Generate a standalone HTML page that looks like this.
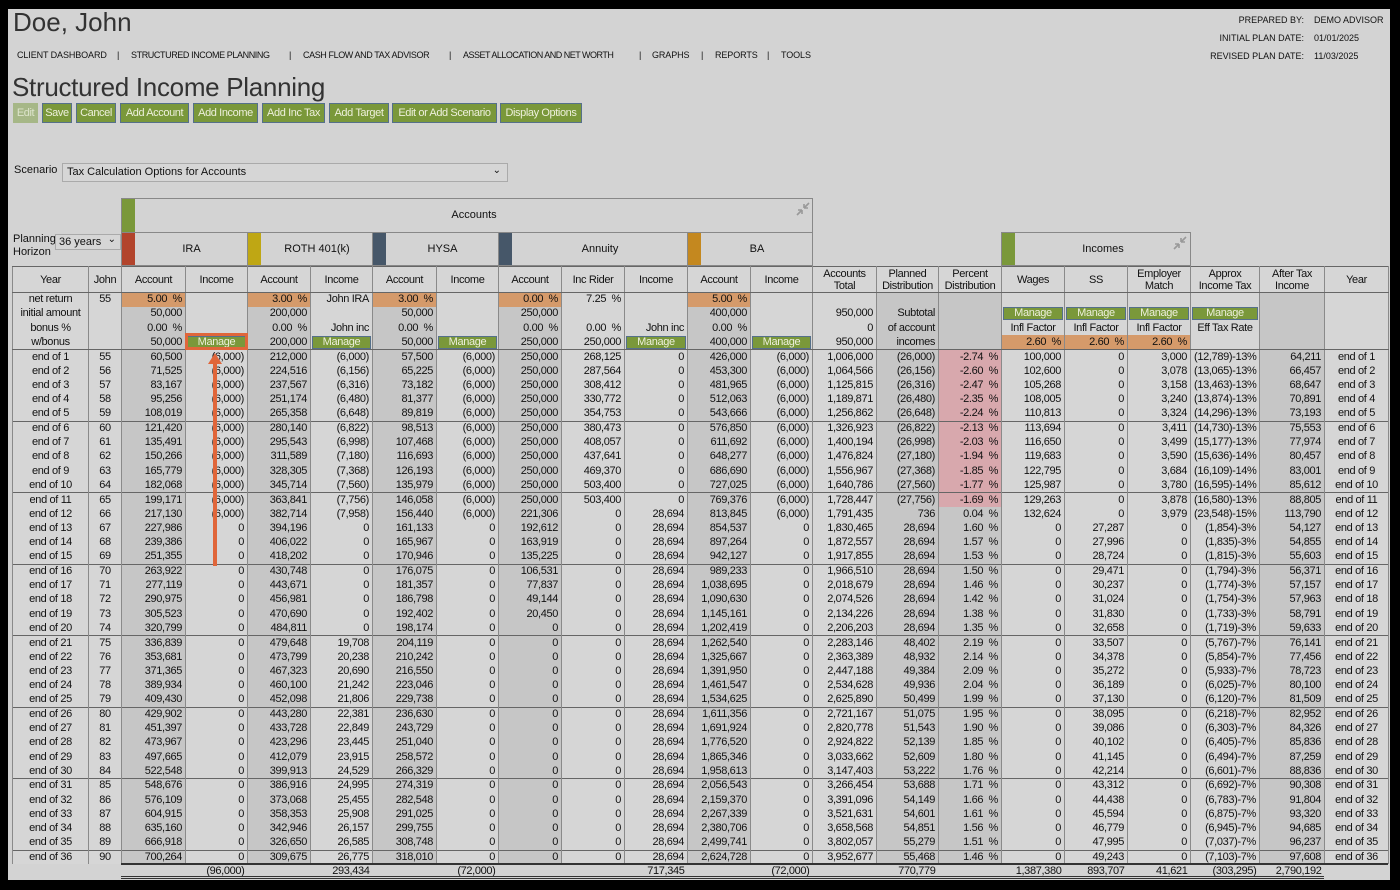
<!DOCTYPE html>
<html><head><meta charset="utf-8">
<style>
*{box-sizing:border-box;margin:0;padding:0}
body{width:1400px;height:890px;background:#000;position:relative;overflow:hidden;font-family:"Liberation Sans",sans-serif;color:#111}
#pg{position:absolute;left:8px;top:9px;width:1382px;height:871px;background:#d3d3d3}
.a{position:absolute;white-space:nowrap}
.nav{font-size:9px;top:50px;letter-spacing:-0.1px}
.btn{position:absolute;top:103px;height:20px;background:#7a983a;border:1px solid #55708a;color:#eef0dc;font-size:11px;line-height:18px;text-align:center;white-space:nowrap;overflow:hidden;letter-spacing:-0.4px}
.rh{font-size:9px;text-align:right;width:160px}
.box{position:absolute;border:1px solid #888;background:#d3d3d3;font-size:11px;text-align:center}
.st{position:absolute}
table{position:absolute;left:12px;top:266px;width:1376px;border-collapse:collapse;table-layout:fixed;font-size:11px;letter-spacing:-0.35px}
td{border-left:1px solid #8a8a8a;border-right:1px solid #8a8a8a;text-align:right;padding:0 3px;height:14.3px;line-height:13px;white-space:nowrap;overflow:hidden}
tr.h td{height:26px;border-top:1px solid #666;border-bottom:1px solid #666;text-align:center;line-height:12px;background:#d6d6d6;padding:0 1px}
tr.g td{border-top:1px solid #666}
tr.pb td{border-bottom:1px solid #666}
td.c{text-align:center}
.or{background:#d59a6a!important}
.pk{background:#d8a8ad!important}
.mg{display:block;background:#7a983a;border:1px solid #55708a;color:#eef0dc;text-align:center;height:13px;line-height:11px;margin:0 -2px}
tr.t td{border:none;background:#d3d3d3!important;height:15px}
col.d{background:#c6c6c6}
col.l{background:#d6d6d6}
</style></head><body>
<div id="pg"></div>
<div class="a" style="left:13px;top:7px;font-size:26px;color:#333">Doe, John</div>
<div class="a nav" style="left:17px">CLIENT DASHBOARD</div><div class="a nav" style="left:117px">|</div>
<div class="a nav" style="left:131px;letter-spacing:-0.4px">STRUCTURED INCOME PLANNING</div><div class="a nav" style="left:289px">|</div>
<div class="a nav" style="left:303px;letter-spacing:-0.4px">CASH FLOW AND TAX ADVISOR</div><div class="a nav" style="left:449px">|</div>
<div class="a nav" style="left:463px;letter-spacing:-0.5px">ASSET ALLOCATION AND NET WORTH</div><div class="a nav" style="left:639px">|</div>
<div class="a nav" style="left:652px">GRAPHS</div><div class="a nav" style="left:701px">|</div>
<div class="a nav" style="left:715px">REPORTS</div><div class="a nav" style="left:767px">|</div>
<div class="a nav" style="left:781px">TOOLS</div>
<div class="a rh" style="left:1144px;top:15px">PREPARED BY:</div><div class="a" style="left:1314px;top:15px;font-size:9px">DEMO ADVISOR</div>
<div class="a rh" style="left:1144px;top:33px">INITIAL PLAN DATE:</div><div class="a" style="left:1314px;top:33px;font-size:9px">01/01/2025</div>
<div class="a rh" style="left:1144px;top:51px">REVISED PLAN DATE:</div><div class="a" style="left:1314px;top:51px;font-size:9px">11/03/2025</div>
<div class="a" style="left:12px;top:72px;font-size:26px;color:#333;letter-spacing:-0.3px">Structured Income Planning</div>
<div class="btn" style="left:13px;width:25px;background:#a6b787;color:#dde4cc;border-color:#a6b787">Edit</div>
<div class="btn" style="left:42px;width:30px">Save</div>
<div class="btn" style="left:76px;width:40px">Cancel</div>
<div class="btn" style="left:120px;width:69px">Add Account</div>
<div class="btn" style="left:193px;width:65px">Add Income</div>
<div class="btn" style="left:262px;width:63px">Add Inc Tax</div>
<div class="btn" style="left:329px;width:60px">Add Target</div>
<div class="btn" style="left:392px;width:105px">Edit or Add Scenario</div>
<div class="btn" style="left:500px;width:82px">Display Options</div>
<div class="a" style="left:14px;top:164px;font-size:11px">Scenario</div>
<div class="a" style="left:62px;top:163px;width:446px;height:19px;border:1px solid #aaa;background:#d6d6d6;font-size:11px;line-height:17px;padding-left:4px">Tax Calculation Options for Accounts<span style="position:absolute;right:6px;top:-2px;font-size:10px">&#8964;</span></div>
<div class="a" style="left:13px;top:233px;font-size:11px;line-height:13px">Planning<br>Horizon</div>
<div class="a" style="left:55px;top:234px;width:66px;height:16px;border:1px solid #aaa;background:#d6d6d6;font-size:11px;line-height:14px;padding-left:3px">36 years<span style="position:absolute;right:4px;top:-2px;font-size:10px">&#8964;</span></div>
<div class="box" style="left:121px;top:198px;width:692px;height:35px;line-height:33px;padding-left:14px">Accounts</div>
<div class="st" style="left:122px;top:199px;width:13px;height:33px;background:#7a983a"></div>
<svg class="a" style="left:795px;top:201px" width="16" height="16"><path d="M2 14 L7 9 M7 9 L7 13 M7 9 L3 9 M14 2 L9 7 M9 7 L9 3 M9 7 L13 7" stroke="#999" stroke-width="1.6" fill="none"/></svg>
<div class="box" style="left:121px;top:232px;width:127px;height:34px;line-height:32px;padding-left:14px">IRA</div><div class="st" style="left:122px;top:233px;width:13px;height:32px;background:#b2442c"></div>
<div class="box" style="left:247px;top:232px;width:126px;height:34px;line-height:32px;padding-left:14px">ROTH 401(k)</div><div class="st" style="left:248px;top:233px;width:13px;height:32px;background:#bfa714"></div>
<div class="box" style="left:372px;top:232px;width:127px;height:34px;line-height:32px;padding-left:14px">HYSA</div><div class="st" style="left:373px;top:233px;width:13px;height:32px;background:#465769"></div>
<div class="box" style="left:498px;top:232px;width:190px;height:34px;line-height:32px;padding-left:14px">Annuity</div><div class="st" style="left:499px;top:233px;width:13px;height:32px;background:#465769"></div>
<div class="box" style="left:687px;top:232px;width:126px;height:34px;line-height:32px;padding-left:14px">BA</div><div class="st" style="left:688px;top:233px;width:13px;height:32px;background:#c4881f"></div>
<div class="box" style="left:1001px;top:232px;width:190px;height:34px;line-height:32px;padding-left:14px">Incomes</div><div class="st" style="left:1002px;top:233px;width:13px;height:32px;background:#7a983a"></div>
<svg class="a" style="left:1172px;top:235px" width="16" height="16"><path d="M2 14 L7 9 M7 9 L7 13 M7 9 L3 9 M14 2 L9 7 M9 7 L9 3 M9 7 L13 7" stroke="#999" stroke-width="1.6" fill="none"/></svg>
<table>
<colgroup><col class="l" style="width:76px"><col class="l" style="width:33px"><col class="d" style="width:64px"><col class="l" style="width:62px"><col class="d" style="width:63px"><col class="l" style="width:62px"><col class="d" style="width:64px"><col class="l" style="width:62px"><col class="d" style="width:63px"><col class="l" style="width:63px"><col class="l" style="width:63px"><col class="d" style="width:63px"><col class="l" style="width:62px"><col class="l" style="width:64px"><col class="d" style="width:62px"><col class="d" style="width:63px"><col class="l" style="width:63px"><col class="l" style="width:63px"><col class="l" style="width:63px"><col class="l" style="width:69px"><col class="d" style="width:65px"><col class="l" style="width:64px"></colgroup>
<tr class="h"><td>Year</td><td>John</td><td>Account</td><td>Income</td><td>Account</td><td>Income</td><td>Account</td><td>Income</td><td>Account</td><td>Inc Rider</td><td>Income</td><td>Account</td><td>Income</td><td>Accounts<br>Total</td><td>Planned<br>Distribution</td><td>Percent<br>Distribution</td><td>Wages</td><td>SS</td><td>Employer<br>Match</td><td>Approx<br>Income Tax</td><td>After Tax<br>Income</td><td>Year</td></tr>
<tr><td class="c">net return</td><td class="c">55</td><td class="or">5.00 &nbsp;%</td><td></td><td class="or">3.00 &nbsp;%</td><td>John IRA</td><td class="or">3.00 &nbsp;%</td><td></td><td class="or">0.00 &nbsp;%</td><td>7.25 &nbsp;%</td><td></td><td class="or">5.00 &nbsp;%</td><td></td><td></td><td></td><td></td><td></td><td></td><td></td><td></td><td></td><td></td></tr>
<tr><td class="c">initial amount</td><td></td><td>50,000</td><td></td><td>200,000</td><td></td><td>50,000</td><td></td><td>250,000</td><td></td><td></td><td>400,000</td><td></td><td>950,000</td><td>Subtotal</td><td></td><td><span class="mg">Manage</span></td><td><span class="mg">Manage</span></td><td><span class="mg">Manage</span></td><td><span class="mg">Manage</span></td><td></td><td></td></tr>
<tr><td class="c">bonus %</td><td></td><td>0.00 &nbsp;%</td><td></td><td>0.00 &nbsp;%</td><td>John inc</td><td>0.00 &nbsp;%</td><td></td><td>0.00 &nbsp;%</td><td>0.00 &nbsp;%</td><td>John inc</td><td>0.00 &nbsp;%</td><td></td><td>0</td><td>of account</td><td></td><td class="c">Infl Factor</td><td class="c">Infl Factor</td><td class="c">Infl Factor</td><td class="c">Eff Tax Rate</td><td></td><td></td></tr>
<tr class="pb"><td class="c">w/bonus</td><td></td><td>50,000</td><td><span class="mg">Manage</span></td><td>200,000</td><td><span class="mg">Manage</span></td><td>50,000</td><td><span class="mg">Manage</span></td><td>250,000</td><td>250,000</td><td><span class="mg">Manage</span></td><td>400,000</td><td><span class="mg">Manage</span></td><td>950,000</td><td>incomes</td><td></td><td class="or">2.60 &nbsp;%</td><td class="or">2.60 &nbsp;%</td><td class="or">2.60 &nbsp;%</td><td></td><td></td><td></td></tr>
<tr><td class="c">end of 1</td><td class="c">55</td><td>60,500</td><td>(6,000)</td><td>212,000</td><td>(6,000)</td><td>57,500</td><td>(6,000)</td><td>250,000</td><td>268,125</td><td>0</td><td>426,000</td><td>(6,000)</td><td>1,006,000</td><td>(26,000)</td><td class="pk">-2.74 &nbsp;%</td><td>100,000</td><td>0</td><td>3,000</td><td>(12,789)-13%</td><td>64,211</td><td class="c">end of 1</td></tr>
<tr><td class="c">end of 2</td><td class="c">56</td><td>71,525</td><td>(6,000)</td><td>224,516</td><td>(6,156)</td><td>65,225</td><td>(6,000)</td><td>250,000</td><td>287,564</td><td>0</td><td>453,300</td><td>(6,000)</td><td>1,064,566</td><td>(26,156)</td><td class="pk">-2.60 &nbsp;%</td><td>102,600</td><td>0</td><td>3,078</td><td>(13,065)-13%</td><td>66,457</td><td class="c">end of 2</td></tr>
<tr><td class="c">end of 3</td><td class="c">57</td><td>83,167</td><td>(6,000)</td><td>237,567</td><td>(6,316)</td><td>73,182</td><td>(6,000)</td><td>250,000</td><td>308,412</td><td>0</td><td>481,965</td><td>(6,000)</td><td>1,125,815</td><td>(26,316)</td><td class="pk">-2.47 &nbsp;%</td><td>105,268</td><td>0</td><td>3,158</td><td>(13,463)-13%</td><td>68,647</td><td class="c">end of 3</td></tr>
<tr><td class="c">end of 4</td><td class="c">58</td><td>95,256</td><td>(6,000)</td><td>251,174</td><td>(6,480)</td><td>81,377</td><td>(6,000)</td><td>250,000</td><td>330,772</td><td>0</td><td>512,063</td><td>(6,000)</td><td>1,189,871</td><td>(26,480)</td><td class="pk">-2.35 &nbsp;%</td><td>108,005</td><td>0</td><td>3,240</td><td>(13,874)-13%</td><td>70,891</td><td class="c">end of 4</td></tr>
<tr><td class="c">end of 5</td><td class="c">59</td><td>108,019</td><td>(6,000)</td><td>265,358</td><td>(6,648)</td><td>89,819</td><td>(6,000)</td><td>250,000</td><td>354,753</td><td>0</td><td>543,666</td><td>(6,000)</td><td>1,256,862</td><td>(26,648)</td><td class="pk">-2.24 &nbsp;%</td><td>110,813</td><td>0</td><td>3,324</td><td>(14,296)-13%</td><td>73,193</td><td class="c">end of 5</td></tr>
<tr class="g"><td class="c">end of 6</td><td class="c">60</td><td>121,420</td><td>(6,000)</td><td>280,140</td><td>(6,822)</td><td>98,513</td><td>(6,000)</td><td>250,000</td><td>380,473</td><td>0</td><td>576,850</td><td>(6,000)</td><td>1,326,923</td><td>(26,822)</td><td class="pk">-2.13 &nbsp;%</td><td>113,694</td><td>0</td><td>3,411</td><td>(14,730)-13%</td><td>75,553</td><td class="c">end of 6</td></tr>
<tr><td class="c">end of 7</td><td class="c">61</td><td>135,491</td><td>(6,000)</td><td>295,543</td><td>(6,998)</td><td>107,468</td><td>(6,000)</td><td>250,000</td><td>408,057</td><td>0</td><td>611,692</td><td>(6,000)</td><td>1,400,194</td><td>(26,998)</td><td class="pk">-2.03 &nbsp;%</td><td>116,650</td><td>0</td><td>3,499</td><td>(15,177)-13%</td><td>77,974</td><td class="c">end of 7</td></tr>
<tr><td class="c">end of 8</td><td class="c">62</td><td>150,266</td><td>(6,000)</td><td>311,589</td><td>(7,180)</td><td>116,693</td><td>(6,000)</td><td>250,000</td><td>437,641</td><td>0</td><td>648,277</td><td>(6,000)</td><td>1,476,824</td><td>(27,180)</td><td class="pk">-1.94 &nbsp;%</td><td>119,683</td><td>0</td><td>3,590</td><td>(15,636)-14%</td><td>80,457</td><td class="c">end of 8</td></tr>
<tr><td class="c">end of 9</td><td class="c">63</td><td>165,779</td><td>(6,000)</td><td>328,305</td><td>(7,368)</td><td>126,193</td><td>(6,000)</td><td>250,000</td><td>469,370</td><td>0</td><td>686,690</td><td>(6,000)</td><td>1,556,967</td><td>(27,368)</td><td class="pk">-1.85 &nbsp;%</td><td>122,795</td><td>0</td><td>3,684</td><td>(16,109)-14%</td><td>83,001</td><td class="c">end of 9</td></tr>
<tr><td class="c">end of 10</td><td class="c">64</td><td>182,068</td><td>(6,000)</td><td>345,714</td><td>(7,560)</td><td>135,979</td><td>(6,000)</td><td>250,000</td><td>503,400</td><td>0</td><td>727,025</td><td>(6,000)</td><td>1,640,786</td><td>(27,560)</td><td class="pk">-1.77 &nbsp;%</td><td>125,987</td><td>0</td><td>3,780</td><td>(16,595)-14%</td><td>85,612</td><td class="c">end of 10</td></tr>
<tr class="g"><td class="c">end of 11</td><td class="c">65</td><td>199,171</td><td>(6,000)</td><td>363,841</td><td>(7,756)</td><td>146,058</td><td>(6,000)</td><td>250,000</td><td>503,400</td><td>0</td><td>769,376</td><td>(6,000)</td><td>1,728,447</td><td>(27,756)</td><td class="pk">-1.69 &nbsp;%</td><td>129,263</td><td>0</td><td>3,878</td><td>(16,580)-13%</td><td>88,805</td><td class="c">end of 11</td></tr>
<tr><td class="c">end of 12</td><td class="c">66</td><td>217,130</td><td>(6,000)</td><td>382,714</td><td>(7,958)</td><td>156,440</td><td>(6,000)</td><td>221,306</td><td>0</td><td>28,694</td><td>813,845</td><td>(6,000)</td><td>1,791,435</td><td>736</td><td>0.04 &nbsp;%</td><td>132,624</td><td>0</td><td>3,979</td><td>(23,548)-15%</td><td>113,790</td><td class="c">end of 12</td></tr>
<tr><td class="c">end of 13</td><td class="c">67</td><td>227,986</td><td>0</td><td>394,196</td><td>0</td><td>161,133</td><td>0</td><td>192,612</td><td>0</td><td>28,694</td><td>854,537</td><td>0</td><td>1,830,465</td><td>28,694</td><td>1.60 &nbsp;%</td><td>0</td><td>27,287</td><td>0</td><td>(1,854)-3%</td><td>54,127</td><td class="c">end of 13</td></tr>
<tr><td class="c">end of 14</td><td class="c">68</td><td>239,386</td><td>0</td><td>406,022</td><td>0</td><td>165,967</td><td>0</td><td>163,919</td><td>0</td><td>28,694</td><td>897,264</td><td>0</td><td>1,872,557</td><td>28,694</td><td>1.57 &nbsp;%</td><td>0</td><td>27,996</td><td>0</td><td>(1,835)-3%</td><td>54,855</td><td class="c">end of 14</td></tr>
<tr><td class="c">end of 15</td><td class="c">69</td><td>251,355</td><td>0</td><td>418,202</td><td>0</td><td>170,946</td><td>0</td><td>135,225</td><td>0</td><td>28,694</td><td>942,127</td><td>0</td><td>1,917,855</td><td>28,694</td><td>1.53 &nbsp;%</td><td>0</td><td>28,724</td><td>0</td><td>(1,815)-3%</td><td>55,603</td><td class="c">end of 15</td></tr>
<tr class="g"><td class="c">end of 16</td><td class="c">70</td><td>263,922</td><td>0</td><td>430,748</td><td>0</td><td>176,075</td><td>0</td><td>106,531</td><td>0</td><td>28,694</td><td>989,233</td><td>0</td><td>1,966,510</td><td>28,694</td><td>1.50 &nbsp;%</td><td>0</td><td>29,471</td><td>0</td><td>(1,794)-3%</td><td>56,371</td><td class="c">end of 16</td></tr>
<tr><td class="c">end of 17</td><td class="c">71</td><td>277,119</td><td>0</td><td>443,671</td><td>0</td><td>181,357</td><td>0</td><td>77,837</td><td>0</td><td>28,694</td><td>1,038,695</td><td>0</td><td>2,018,679</td><td>28,694</td><td>1.46 &nbsp;%</td><td>0</td><td>30,237</td><td>0</td><td>(1,774)-3%</td><td>57,157</td><td class="c">end of 17</td></tr>
<tr><td class="c">end of 18</td><td class="c">72</td><td>290,975</td><td>0</td><td>456,981</td><td>0</td><td>186,798</td><td>0</td><td>49,144</td><td>0</td><td>28,694</td><td>1,090,630</td><td>0</td><td>2,074,526</td><td>28,694</td><td>1.42 &nbsp;%</td><td>0</td><td>31,024</td><td>0</td><td>(1,754)-3%</td><td>57,963</td><td class="c">end of 18</td></tr>
<tr><td class="c">end of 19</td><td class="c">73</td><td>305,523</td><td>0</td><td>470,690</td><td>0</td><td>192,402</td><td>0</td><td>20,450</td><td>0</td><td>28,694</td><td>1,145,161</td><td>0</td><td>2,134,226</td><td>28,694</td><td>1.38 &nbsp;%</td><td>0</td><td>31,830</td><td>0</td><td>(1,733)-3%</td><td>58,791</td><td class="c">end of 19</td></tr>
<tr><td class="c">end of 20</td><td class="c">74</td><td>320,799</td><td>0</td><td>484,811</td><td>0</td><td>198,174</td><td>0</td><td>0</td><td>0</td><td>28,694</td><td>1,202,419</td><td>0</td><td>2,206,203</td><td>28,694</td><td>1.35 &nbsp;%</td><td>0</td><td>32,658</td><td>0</td><td>(1,719)-3%</td><td>59,633</td><td class="c">end of 20</td></tr>
<tr class="g"><td class="c">end of 21</td><td class="c">75</td><td>336,839</td><td>0</td><td>479,648</td><td>19,708</td><td>204,119</td><td>0</td><td>0</td><td>0</td><td>28,694</td><td>1,262,540</td><td>0</td><td>2,283,146</td><td>48,402</td><td>2.19 &nbsp;%</td><td>0</td><td>33,507</td><td>0</td><td>(5,767)-7%</td><td>76,141</td><td class="c">end of 21</td></tr>
<tr><td class="c">end of 22</td><td class="c">76</td><td>353,681</td><td>0</td><td>473,799</td><td>20,238</td><td>210,242</td><td>0</td><td>0</td><td>0</td><td>28,694</td><td>1,325,667</td><td>0</td><td>2,363,389</td><td>48,932</td><td>2.14 &nbsp;%</td><td>0</td><td>34,378</td><td>0</td><td>(5,854)-7%</td><td>77,456</td><td class="c">end of 22</td></tr>
<tr><td class="c">end of 23</td><td class="c">77</td><td>371,365</td><td>0</td><td>467,323</td><td>20,690</td><td>216,550</td><td>0</td><td>0</td><td>0</td><td>28,694</td><td>1,391,950</td><td>0</td><td>2,447,188</td><td>49,384</td><td>2.09 &nbsp;%</td><td>0</td><td>35,272</td><td>0</td><td>(5,933)-7%</td><td>78,723</td><td class="c">end of 23</td></tr>
<tr><td class="c">end of 24</td><td class="c">78</td><td>389,934</td><td>0</td><td>460,100</td><td>21,242</td><td>223,046</td><td>0</td><td>0</td><td>0</td><td>28,694</td><td>1,461,547</td><td>0</td><td>2,534,628</td><td>49,936</td><td>2.04 &nbsp;%</td><td>0</td><td>36,189</td><td>0</td><td>(6,025)-7%</td><td>80,100</td><td class="c">end of 24</td></tr>
<tr><td class="c">end of 25</td><td class="c">79</td><td>409,430</td><td>0</td><td>452,098</td><td>21,806</td><td>229,738</td><td>0</td><td>0</td><td>0</td><td>28,694</td><td>1,534,625</td><td>0</td><td>2,625,890</td><td>50,499</td><td>1.99 &nbsp;%</td><td>0</td><td>37,130</td><td>0</td><td>(6,120)-7%</td><td>81,509</td><td class="c">end of 25</td></tr>
<tr class="g"><td class="c">end of 26</td><td class="c">80</td><td>429,902</td><td>0</td><td>443,280</td><td>22,381</td><td>236,630</td><td>0</td><td>0</td><td>0</td><td>28,694</td><td>1,611,356</td><td>0</td><td>2,721,167</td><td>51,075</td><td>1.95 &nbsp;%</td><td>0</td><td>38,095</td><td>0</td><td>(6,218)-7%</td><td>82,952</td><td class="c">end of 26</td></tr>
<tr><td class="c">end of 27</td><td class="c">81</td><td>451,397</td><td>0</td><td>433,728</td><td>22,849</td><td>243,729</td><td>0</td><td>0</td><td>0</td><td>28,694</td><td>1,691,924</td><td>0</td><td>2,820,778</td><td>51,543</td><td>1.90 &nbsp;%</td><td>0</td><td>39,086</td><td>0</td><td>(6,303)-7%</td><td>84,326</td><td class="c">end of 27</td></tr>
<tr><td class="c">end of 28</td><td class="c">82</td><td>473,967</td><td>0</td><td>423,296</td><td>23,445</td><td>251,040</td><td>0</td><td>0</td><td>0</td><td>28,694</td><td>1,776,520</td><td>0</td><td>2,924,822</td><td>52,139</td><td>1.85 &nbsp;%</td><td>0</td><td>40,102</td><td>0</td><td>(6,405)-7%</td><td>85,836</td><td class="c">end of 28</td></tr>
<tr><td class="c">end of 29</td><td class="c">83</td><td>497,665</td><td>0</td><td>412,079</td><td>23,915</td><td>258,572</td><td>0</td><td>0</td><td>0</td><td>28,694</td><td>1,865,346</td><td>0</td><td>3,033,662</td><td>52,609</td><td>1.80 &nbsp;%</td><td>0</td><td>41,145</td><td>0</td><td>(6,494)-7%</td><td>87,259</td><td class="c">end of 29</td></tr>
<tr><td class="c">end of 30</td><td class="c">84</td><td>522,548</td><td>0</td><td>399,913</td><td>24,529</td><td>266,329</td><td>0</td><td>0</td><td>0</td><td>28,694</td><td>1,958,613</td><td>0</td><td>3,147,403</td><td>53,222</td><td>1.76 &nbsp;%</td><td>0</td><td>42,214</td><td>0</td><td>(6,601)-7%</td><td>88,836</td><td class="c">end of 30</td></tr>
<tr class="g"><td class="c">end of 31</td><td class="c">85</td><td>548,676</td><td>0</td><td>386,916</td><td>24,995</td><td>274,319</td><td>0</td><td>0</td><td>0</td><td>28,694</td><td>2,056,543</td><td>0</td><td>3,266,454</td><td>53,688</td><td>1.71 &nbsp;%</td><td>0</td><td>43,312</td><td>0</td><td>(6,692)-7%</td><td>90,308</td><td class="c">end of 31</td></tr>
<tr><td class="c">end of 32</td><td class="c">86</td><td>576,109</td><td>0</td><td>373,068</td><td>25,455</td><td>282,548</td><td>0</td><td>0</td><td>0</td><td>28,694</td><td>2,159,370</td><td>0</td><td>3,391,096</td><td>54,149</td><td>1.66 &nbsp;%</td><td>0</td><td>44,438</td><td>0</td><td>(6,783)-7%</td><td>91,804</td><td class="c">end of 32</td></tr>
<tr><td class="c">end of 33</td><td class="c">87</td><td>604,915</td><td>0</td><td>358,353</td><td>25,908</td><td>291,025</td><td>0</td><td>0</td><td>0</td><td>28,694</td><td>2,267,339</td><td>0</td><td>3,521,631</td><td>54,601</td><td>1.61 &nbsp;%</td><td>0</td><td>45,594</td><td>0</td><td>(6,875)-7%</td><td>93,320</td><td class="c">end of 33</td></tr>
<tr><td class="c">end of 34</td><td class="c">88</td><td>635,160</td><td>0</td><td>342,946</td><td>26,157</td><td>299,755</td><td>0</td><td>0</td><td>0</td><td>28,694</td><td>2,380,706</td><td>0</td><td>3,658,568</td><td>54,851</td><td>1.56 &nbsp;%</td><td>0</td><td>46,779</td><td>0</td><td>(6,945)-7%</td><td>94,685</td><td class="c">end of 34</td></tr>
<tr><td class="c">end of 35</td><td class="c">89</td><td>666,918</td><td>0</td><td>326,650</td><td>26,585</td><td>308,748</td><td>0</td><td>0</td><td>0</td><td>28,694</td><td>2,499,741</td><td>0</td><td>3,802,057</td><td>55,279</td><td>1.51 &nbsp;%</td><td>0</td><td>47,995</td><td>0</td><td>(7,037)-7%</td><td>96,237</td><td class="c">end of 35</td></tr>
<tr class="g"><td class="c">end of 36</td><td class="c">90</td><td>700,264</td><td>0</td><td>309,675</td><td>26,775</td><td>318,010</td><td>0</td><td>0</td><td>0</td><td>28,694</td><td>2,624,728</td><td>0</td><td>3,952,677</td><td>55,468</td><td>1.46 &nbsp;%</td><td>0</td><td>49,243</td><td>0</td><td>(7,103)-7%</td><td>97,608</td><td class="c">end of 36</td></tr>
<tr class="t"><td></td><td></td><td></td><td>(96,000)</td><td></td><td>293,434</td><td></td><td>(72,000)</td><td></td><td></td><td>717,345</td><td></td><td>(72,000)</td><td></td><td>770,779</td><td></td><td>1,387,380</td><td>893,707</td><td>41,621</td><td>(303,295)</td><td>2,790,192</td><td></td></tr>
</table>
<div class="a" style="left:121px;top:863px;width:1267px;height:2px;background:#333"></div>
<div class="a" style="left:121px;top:876px;width:1203px;height:3px;border-top:1px solid #333;border-bottom:1px solid #333"></div>
<div class="a" style="left:185px;top:333px;width:63px;height:17px;border:3px solid #e0663a"></div>
<svg class="a" style="left:205px;top:350px" width="20" height="220"><path d="M10 10 L10 216" stroke="#e0663a" stroke-width="4"/><path d="M3 14 L10 3 L17 14 Z" fill="#e0663a"/></svg>
</body></html>
